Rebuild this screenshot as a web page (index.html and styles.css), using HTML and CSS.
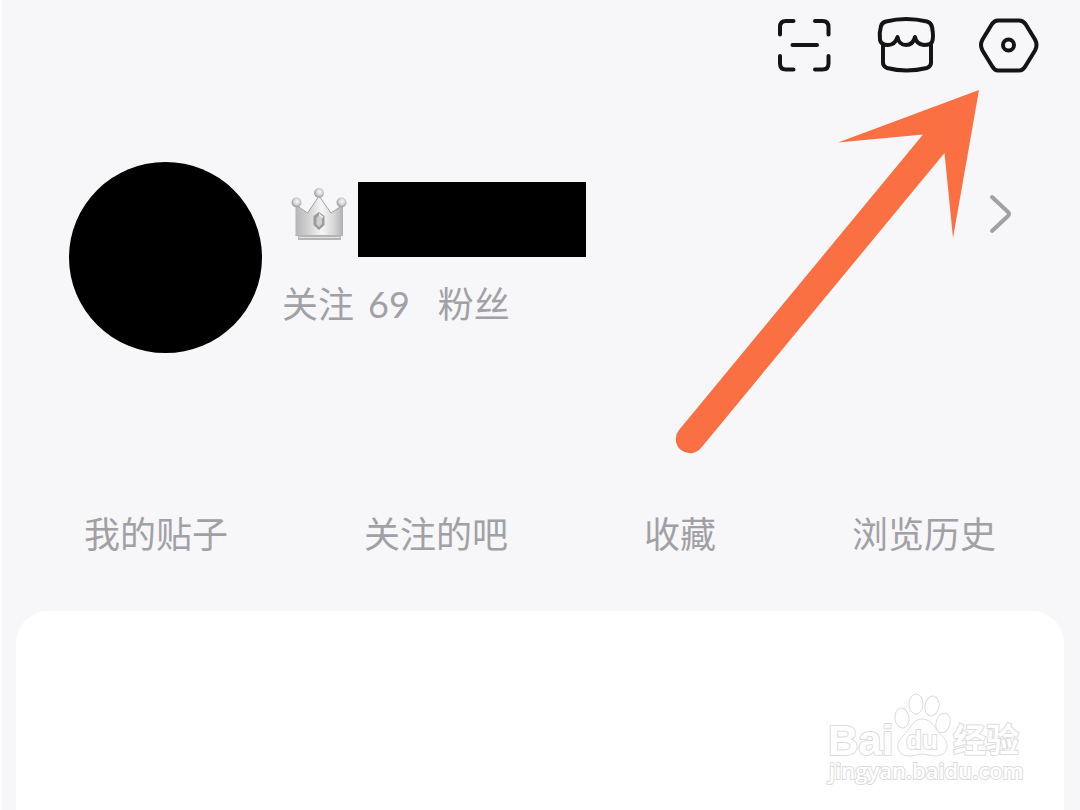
FILE: index.html
```html
<!DOCTYPE html>
<html lang="zh-CN">
<head>
    <meta charset="UTF-8">
    <meta name="viewport" content="width=device-width, initial-scale=1.0">
    <title>我的</title>
    <link rel="stylesheet" href="styles.css">
</head>
<body>
    <div class="page">
        <header class="toolbar">
            <button type="button" class="icon-btn" aria-label="扫一扫">
                <svg viewBox="0 0 64 64" class="icon">
                    <path d="M8 21.500V14Q8 8 14 8H21.500M43 8H50.500Q56.500 8 56.500 14V21.500M56.500 43V50.500Q56.500 56.500 50.500 56.500H43M21.500 56.500H14Q8 56.500 8 50.500V43M20.500 32H45"/>
                </svg>
            </button>
            <button type="button" class="icon-btn" aria-label="商城">
                <svg viewBox="0 0 64 64" class="icon">
                    <path d="M12 8.500Q32 3.500 53 8.500Q57 9.500 58 14Q60 24 58 29Q56.500 32 50 32Q42 31 41 24Q39 32 32 32T23.500 24Q21 32 14 32Q7 32 6 27Q5 20 7 13Q8 9.500 12 8.500Z"/>
                    <path d="M9 32V50Q9 53 13 55Q32 60 53 55Q57 53 57 50V32"/>
                </svg>
            </button>
            <button type="button" class="icon-btn" aria-label="设置">
                <svg viewBox="0 0 64 64" class="icon">
                    <path d="M22 7.500H43Q47 7.500 49.500 11L59 26.500Q62 32 59 37.500L49.500 53Q47 57.500 43 57.500H22Q18.500 57.500 16 53L6.500 37.500Q3.500 32 6.500 26.500L16 11Q18.500 7.500 22 7.500Z"/>
                    <circle cx="32.500" cy="32" r="5.500"/>
                </svg>
            </button>
        </header>

        <section class="profile">
            <div class="avatar"></div>
            <div class="info">
                <div class="name-row">
                    <svg viewBox="0 0 60 60" class="crown">
                        <defs>
                            <linearGradient id="metal">
                                <stop offset="0" stop-color="#b5b5b5"/>
                                <stop offset="0.3" stop-color="#d5d5d5"/>
                                <stop offset="0.55" stop-color="#f6f6f6"/>
                                <stop offset="0.8" stop-color="#d8d8d8"/>
                                <stop offset="1" stop-color="#b0b0b0"/>
                            </linearGradient>
                            <radialGradient id="ball" cx="0.55" cy="0.4">
                                <stop offset="0" stop-color="#f8f8f8"/>
                                <stop offset="0.6" stop-color="#d6d6d6"/>
                                <stop offset="1" stop-color="#a8a8a8"/>
                            </radialGradient>
                        </defs>
                        <path d="M8 53H51V58H8Z" fill="#b5b5b5"/>
                        <path d="M5.500 23L17.500 31L29 14L41 31L53 23V54H5.500Z" fill="url(#metal)"/>
                        <path d="M6 23L17.500 31L29 14L41 31L53 23" stroke="#a0a0a0"/>
                        <path d="M5.500 53.500H53" stroke="#b4b4b4"/>
                        <path d="M9 55.500H50" stroke="#e2e2e2"/>
                        <circle cx="6.500" cy="20.500" r="5" fill="url(#ball)"/>
                        <circle cx="29" cy="11" r="5" fill="url(#ball)"/>
                        <circle cx="51.500" cy="20.500" r="5" fill="url(#ball)"/>
                        <path d="M29 30L34.500 34V43L29 48L23.500 43V34Z" fill="#9c9c9c"/>
                        <path d="M29 31L33.500 35L31.500 37L29 34Z" fill="#ededed"/>
                        <path d="M29 33L32 36V42L29 45L26.500 42V36Z" fill="#cfcfcf"/>
                    </svg>
                    <div class="name"></div>
                </div>
                <div class="stats">
                    <span>关注</span>
                    <span class="count">69</span>
                    <span>粉丝</span>
                </div>
            </div>
            <button type="button" class="more" aria-label="个人主页">
                <svg viewBox="0 0 24 40" class="chevron">
                    <path d="M3 3L19 18Q21 20 19 22L3 37"/>
                </svg>
            </button>
        </section>

        <nav class="tabs">
            <a href="#posts">我的贴子</a>
            <a href="#forums">关注的吧</a>
            <a href="#favorites">收藏</a>
            <a href="#history">浏览历史</a>
        </nav>

        <main class="card">
            <svg viewBox="0 0 204 108" class="watermark" role="img" aria-label="Baidu 经验">
                <text x="4" y="63" class="wm-logo">Bai</text>
                <g class="wm-paw">
                    <ellipse cx="78" cy="26" rx="7" ry="10" transform="rotate(-8 78 26)"/>
                    <ellipse cx="92" cy="12" rx="7" ry="10"/>
                    <ellipse cx="108" cy="14" rx="7" ry="10" transform="rotate(12 108 14)"/>
                    <ellipse cx="119" cy="31" rx="7" ry="10" transform="rotate(15 119 31)"/>
                    <path d="M98 27C88 27 86 38 79 44C70 52 73 64 85 64C91 64 94 62 98 62C103 62 107 64 112 64C125 63 126 51 118 44C111 38 109 27 98 27Z"/>
                </g>
                <text x="82" y="57" class="wm-du">du</text>
                <text x="129" y="60" class="wm-cn">经验</text>
                <text x="5" y="87" class="wm-url">jingyan.baidu.com</text>
            </svg>
        </main>

        <!-- flecha que señala el botón de ajustes -->
        <svg viewBox="0 0 310 370" class="arrow">
            <path d="M309 0L168 52.500L253 44.500L9 340A14 14 0 0 0 31 358L274.500 63L283 148Z"/>
        </svg>
    </div>
</body>
</html>
```

FILE: styles.css
```css
* {
    box-sizing: border-box;
}
body {
    margin: 0;
    background: #f7f7fa;
    color: #a1a1a5;
    font-family: Lato, "Noto Sans CJK SC", sans-serif;
    font-size: 36px;
    line-height: 52px;
}
button {
    padding: 0;
    border: none;
    background: none;
    cursor: pointer;
}
svg {
    display: block;
}
.page {
    position: relative;
    display: flex;
    flex-direction: column;
    min-height: 100vh;
    border-left: 2px solid #fcfcfe;
}
.toolbar {
    display: flex;
    justify-content: flex-end;
    gap: 38px;
    padding: 13px 40px;
}
.icon {
    width: 64px;
    height: 64px;
    fill: none;
    stroke: #141414;
    stroke-width: 4;
    stroke-linecap: round;
    stroke-linejoin: round;
}
.profile {
    display: flex;
    align-items: flex-start;
    padding: 72px 67px 0;
}
.avatar {
    width: 193px;
    height: 191px;
    border-radius: 50%;
    background: #000;
}
.info {
    flex: 1;
    padding: 20px 0 0 20px;
}
.name-row {
    display: flex;
    align-items: flex-start;
    gap: 8px;
    padding-left: 8px;
}
.crown {
    width: 60px;
    height: 60px;
    fill: none;
}
.name {
    width: 228px;
    height: 75px;
    background: #000;
}
.stats {
    display: flex;
    padding-top: 21px;
}
.count {
    margin: 0 28px 0 14px;
}
.more {
    padding-top: 32px;
}
.chevron {
    width: 24px;
    height: 40px;
    fill: none;
    stroke: #a1a1a5;
    stroke-width: 4;
    stroke-linecap: round;
}
.tabs {
    display: flex;
    justify-content: space-between;
    padding: 155px 84px 51px 82px;
}
.tabs a {
    color: inherit;
    text-decoration: none;
}
.card {
    flex: 1;
    display: flex;
    justify-content: flex-end;
    align-items: flex-end;
    margin: 0 16px 0 14px;
    padding: 0 36px 10px;
    border-radius: 32px 32px 0 0;
    background: #fff;
}
.watermark {
    width: 204px;
    height: 108px;
    fill: #fff;
    stroke: #dcdcdc;
    stroke-width: 1;
}
.watermark text {
    paint-order: stroke;
    stroke-width: 2;
}
.watermark .wm-logo {
    font: bold 42px "Liberation Sans", sans-serif;
}
.watermark .wm-du {
    font: bold 26px "Liberation Sans", sans-serif;
}
.watermark .wm-cn {
    font: bold 33px "Noto Sans CJK SC", sans-serif;
}
.watermark .wm-url {
    font: 600 22px "Open Sans", sans-serif;
}
.arrow {
    position: absolute;
    top: 90px;
    right: 100px;
    width: 310px;
    height: 370px;
    fill: #fa7042;
    pointer-events: none;
}
```
